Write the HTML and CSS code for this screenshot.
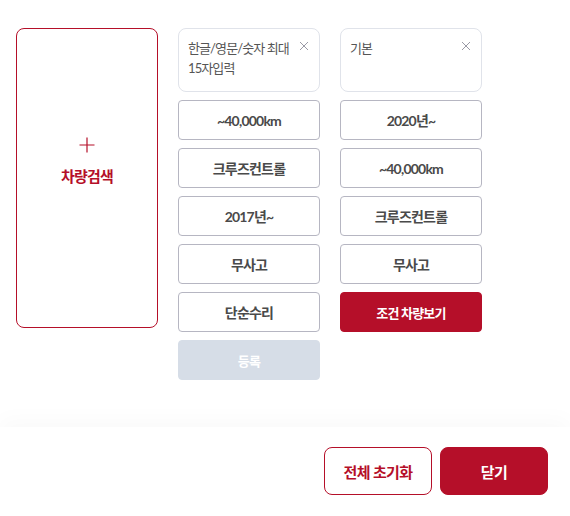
FILE: index.html
```html
<!DOCTYPE html>
<html lang="ko">
<head>
<meta charset="utf-8">
<title>차량검색</title>
<link rel="stylesheet" href="styles.css">
</head>
<body>
<div class="page">
  <main class="main">
    <div class="search-card">
      <svg class="plus" width="16" height="16" viewBox="0 0 16 16"><path d="M8 0.5V15.5M0.5 8H15.5" stroke="#b50f29" stroke-width="1.2" fill="none"/></svg>
      <span class="search-label">차량검색</span>
    </div>
    <div class="col">
      <div class="field">
        <span class="field-text">한글/영문/숫자 최대 15자입력</span>
        <svg class="clear" width="10" height="10" viewBox="0 0 10 10"><path d="M1 1L9 9M9 1L1 9" stroke="#9a9aa6" stroke-width="1" fill="none"/></svg>
      </div>
      <div class="opt">~40,000km</div>
      <div class="opt">크루즈컨트롤</div>
      <div class="opt">2017년~</div>
      <div class="opt">무사고</div>
      <div class="opt">단순수리</div>
      <div class="opt opt-disabled">등록</div>
    </div>
    <div class="col">
      <div class="field">
        <span class="field-text">기본</span>
        <svg class="clear" width="10" height="10" viewBox="0 0 10 10"><path d="M1 1L9 9M9 1L1 9" stroke="#9a9aa6" stroke-width="1" fill="none"/></svg>
      </div>
      <div class="opt">2020년~</div>
      <div class="opt">~40,000km</div>
      <div class="opt">크루즈컨트롤</div>
      <div class="opt">무사고</div>
      <div class="opt opt-primary">조건 차량보기</div>
    </div>
  </main>
  <footer class="footer">
    <button class="btn btn-outline">전체 초기화</button>
    <button class="btn btn-fill">닫기</button>
  </footer>
</div>
</body>
</html>
```
FILE: styles.css
```css
* { box-sizing: border-box; }
html, body { margin: 0; padding: 0; background: #fff; }
body {
  font-family: Lato, "Noto Sans CJK KR", sans-serif;
  color: #444;
}
.page {
  width: 570px;
  height: 516px;
  display: flex;
  flex-direction: column;
  overflow: hidden;
}
.main {
  height: 427px;
  padding: 28px 16px 0;
  display: flex;
  align-items: flex-start;
  gap: 20px;
}
.search-card {
  width: 142px;
  height: 300px;
  border: 1px solid #b50f29;
  border-radius: 8px;
  display: flex;
  flex-direction: column;
  align-items: center;
  padding-top: 108px;
}
.plus { display: block; }
.search-label {
  margin-top: 13px;
  font-size: 15px;
  font-weight: 700;
  color: #b50f29;
  letter-spacing: -0.8px;
  line-height: 20px;
}
.col {
  width: 142px;
  display: flex;
  flex-direction: column;
  gap: 8px;
}
.field {
  height: 64px;
  border: 1px solid #e0e3ea;
  border-radius: 8px;
  padding: 9px 10px 0 9px;
  display: flex;
  align-items: flex-start;
  gap: 1px;
}
.field-text {
  flex: 1;
  font-size: 13px;
  line-height: 20px;
  color: #555;
  letter-spacing: -0.9px;
  word-break: keep-all;
}
.clear { margin-top: 3px; flex: none; }
.opt {
  height: 40px;
  border: 1px solid #b6b6c2;
  border-radius: 4px;
  display: flex;
  align-items: center;
  justify-content: center;
  font-size: 14px;
  font-weight: 700;
  color: #4a4a4a;
  letter-spacing: -0.8px;
}
.opt-disabled {
  border-color: #d6dde7;
  background: #d6dde7;
  color: #fff;
  font-size: 13px;
}
.opt-primary {
  border-color: #b50f29;
  background: #b50f29;
  color: #fff;
  font-size: 13px;
}
.footer {
  flex: 1;
  display: flex;
  justify-content: flex-end;
  align-items: flex-start;
  gap: 8px;
  padding: 20px 22px 0 0;
  background: #fff;
  box-shadow: 0 -8px 20px rgba(0, 0, 0, 0.025);
  position: relative;
}
.btn {
  width: 108px;
  height: 48px;
  border-radius: 8px;
  font-family: Lato, "Noto Sans CJK KR", sans-serif;
  font-size: 15px;
  font-weight: 700;
  letter-spacing: -0.6px;
  cursor: pointer;
}
.btn-outline {
  border: 1px solid #b50f29;
  background: #fff;
  color: #b50f29;
}
.btn-fill {
  border: 1px solid #b50f29;
  background: #b50f29;
  color: #fff;
}
```
